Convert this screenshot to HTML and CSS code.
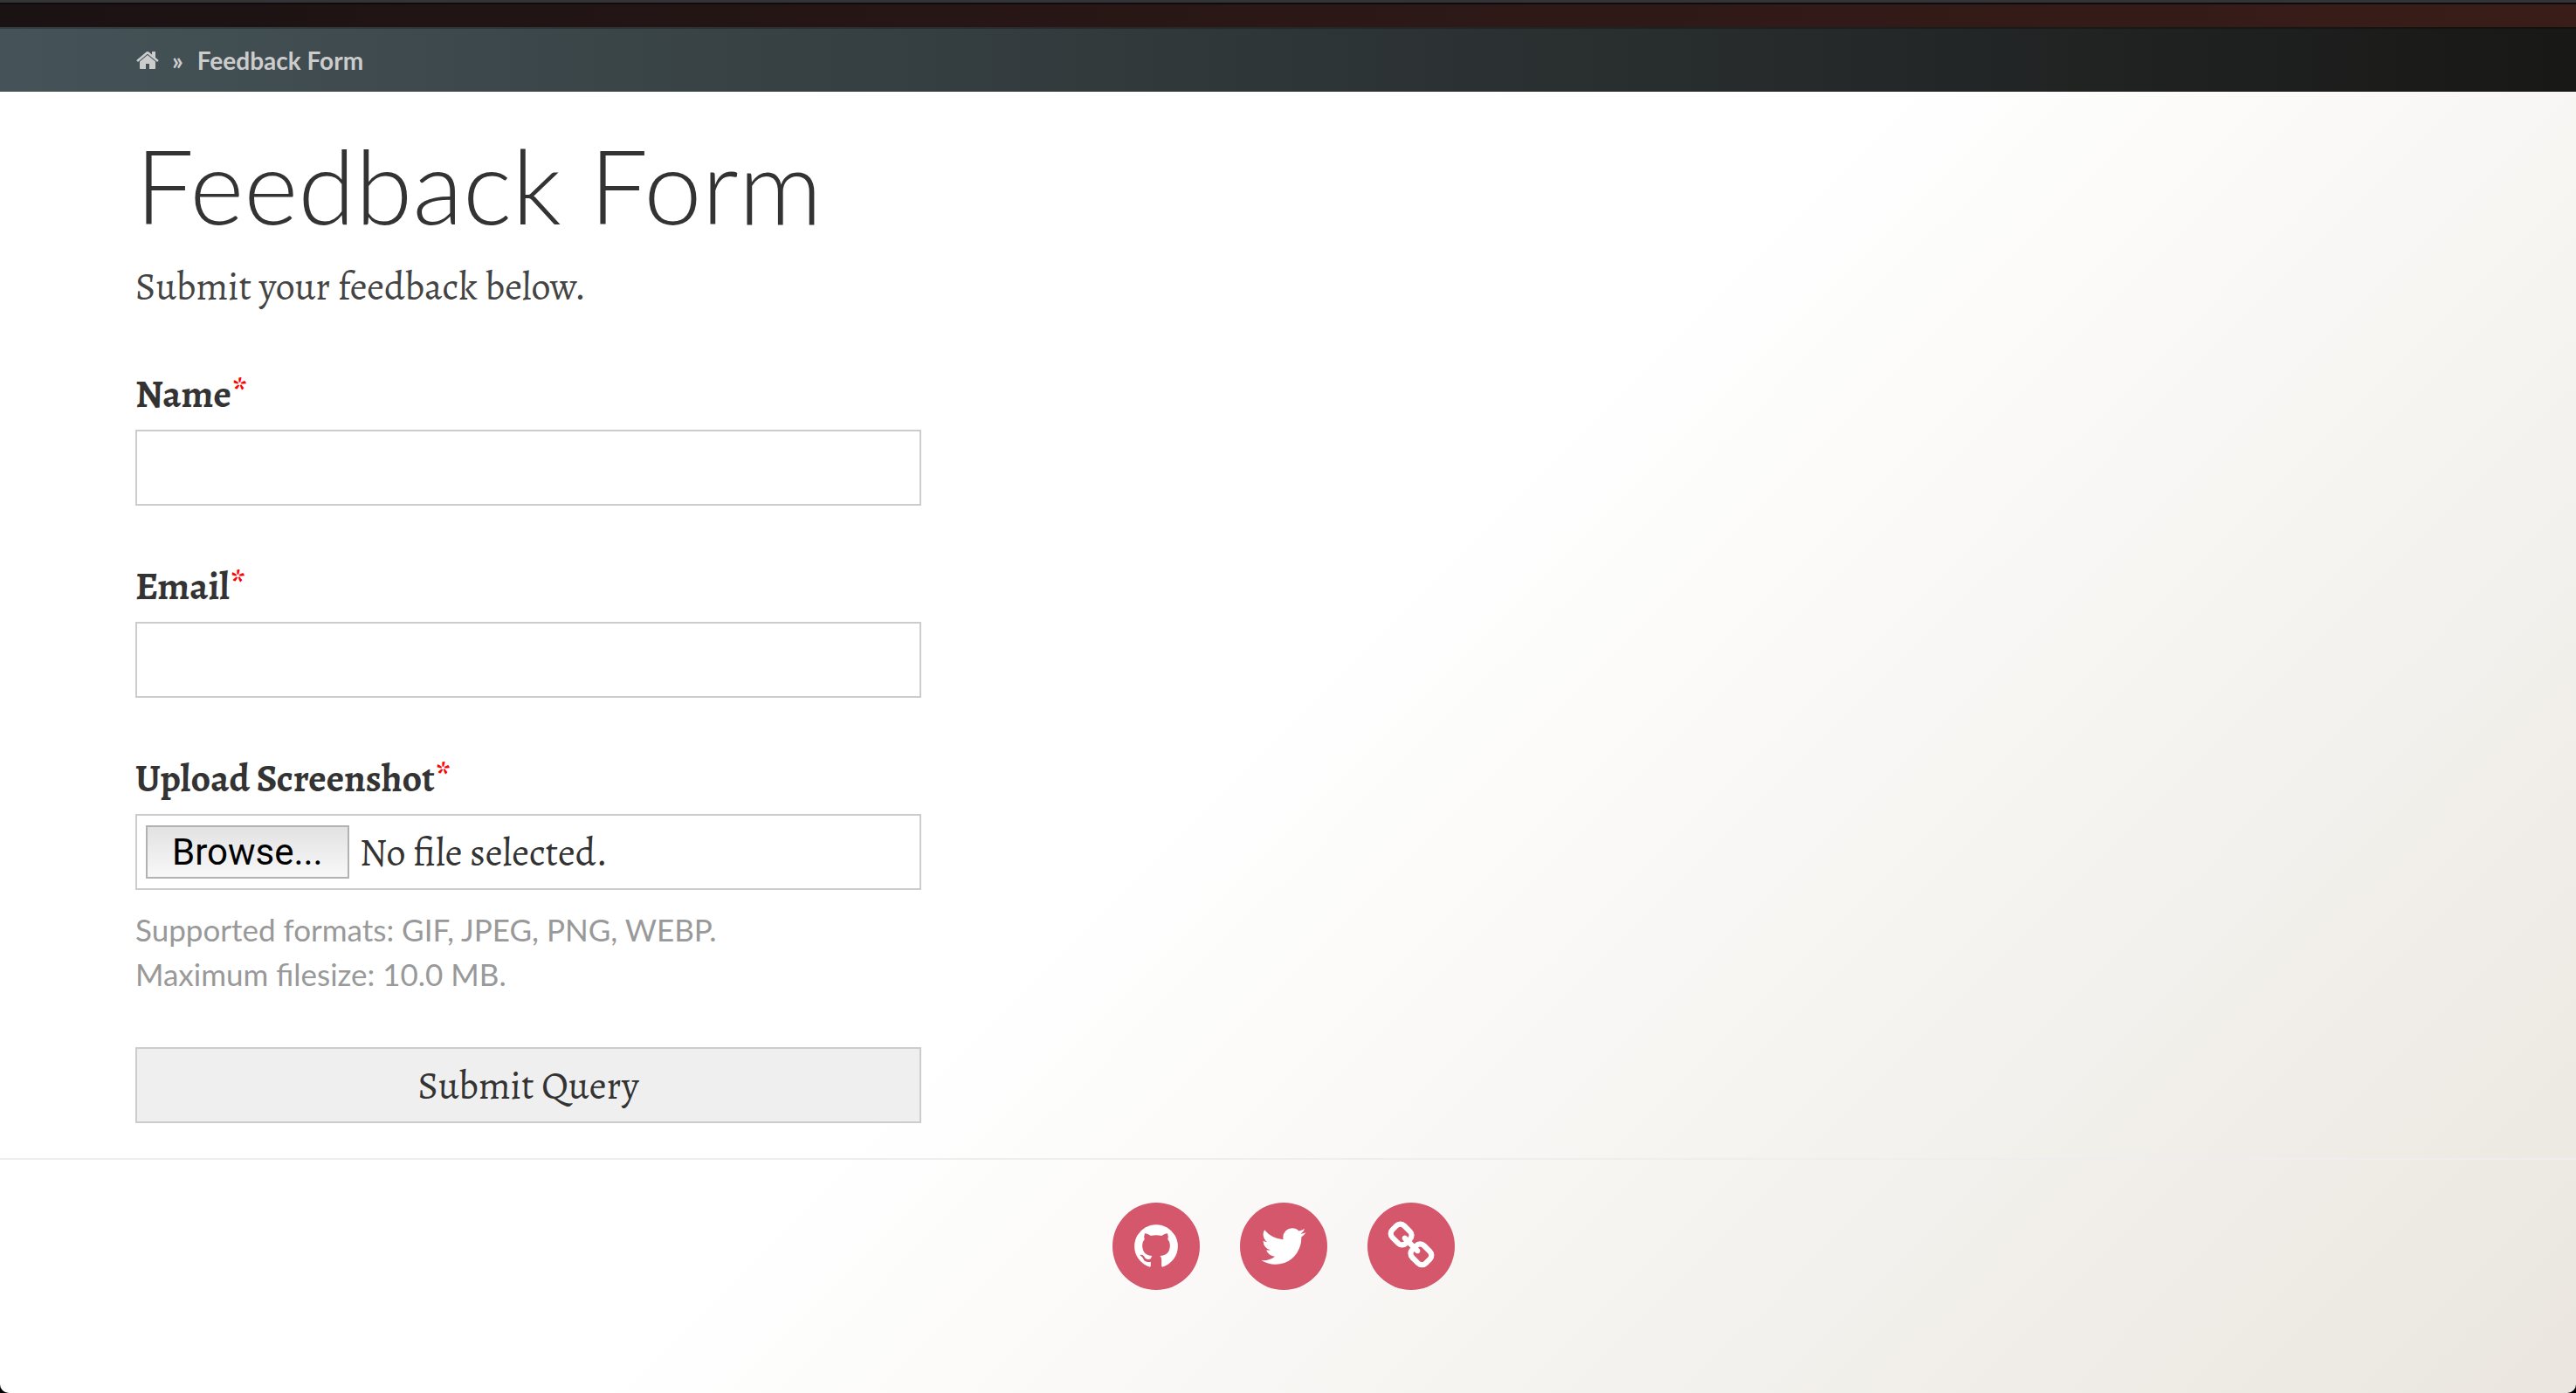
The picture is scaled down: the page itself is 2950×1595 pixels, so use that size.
FILE: index.html
```html
<!DOCTYPE html>
<html lang="en">
<head>
<meta charset="utf-8">
<meta name="viewport" content="width=device-width, initial-scale=1">
<title>Feedback Form</title>
<link rel="stylesheet" href="styles.css">
</head>
<body>
<div class="page">
  <div class="topbar"></div>
  <nav class="breadcrumb" aria-label="Breadcrumb">
    <a class="breadcrumb-home" href="#" aria-label="Home"><svg class="icon-home" viewBox="0 0 1792 1792" aria-hidden="true"><path d="M1472 992v480q0 26-19 45t-45 19h-384v-384h-256v384h-384q-26 0-45-19t-19-45v-480q0-1 .5-3t.5-3l575-474 575 474q1 2 1 6zm223-69l-62 74q-8 9-21 11h-3q-13 0-21-7l-692-577-692 577q-12 8-24 7-13-2-21-11l-62-74q-8-10-7-23.5t11-21.5l719-599q32-26 76-26t76 26l244 204v-195q0-14 9-23t23-9h192q14 0 23 9t9 23v408l219 182q10 8 11 21.5t-7 23.5z"/></svg></a>
    <span class="breadcrumb-sep">»</span>
    <a class="breadcrumb-current" href="#">Feedback Form</a>
  </nav>
  <main class="content">
    <h1 class="title">Feedback Form</h1>
    <p class="intro">Submit your feedback below.</p>
    <form class="form">
      <div class="field">
        <label class="label" for="name">Name<span class="required">*</span></label>
        <input class="input" id="name" type="text">
      </div>
      <div class="field">
        <label class="label" for="email">Email<span class="required">*</span></label>
        <input class="input" id="email" type="email">
      </div>
      <div class="field">
        <label class="label" for="screenshot">Upload Screenshot<span class="required">*</span></label>
        <div class="input file">
          <span class="file-button" aria-hidden="true">Browse...</span>
          <span class="file-name" aria-hidden="true">No file selected.</span>
          <input class="file-native" id="screenshot" type="file" accept=".gif,.jpg,.jpeg,.png,.webp">
        </div>
        <p class="help">Supported formats: GIF, JPEG, PNG, WEBP.<br>Maximum filesize: 10.0 MB.</p>
      </div>
      <button class="submit" type="submit">Submit Query</button>
    </form>
  </main>
  <footer class="footer">
    <a class="social" href="#" aria-label="GitHub"><svg class="icon-social" viewBox="0 0 1792 1792" aria-hidden="true"><path d="M896 128q209 0 385.500 103t279.500 279.500 103 385.500q0 251-146.500 451.500t-378.500 277.500q-27 5-40-7t-13-30q0-3 .5-76.500t.5-134.500q0-97-52-142 57-6 102.500-18t94-39 81-66.500 53-105 20.500-150.500q0-119-79-206 37-91-8-204-28-9-81 11t-92 44l-38 24q-93-26-192-26t-192 26q-16-11-42.500-27t-83.500-38.500-85-13.500q-45 113-8 204-79 87-79 206 0 85 20.500 150t52.500 105 80.500 67 94 39 102.500 18q-39 36-49 103-21 10-45 15t-57 5-65.500-21.500-55.500-62.500q-19-32-48.500-52t-49.500-24l-20-3q-21 0-29 4.500t-5 11.500 9 14 13 12l7 5q22 10 43.500 38t31.500 51l10 23q13 38 44 61.500t67 30 69.500 7 55.500-3.500l23-4q0 38 .5 88.500t.5 54.500q0 18-13 30t-40 7q-232-77-378.500-277.500t-146.500-451.500q0-209 103-385.500t279.500-279.500 385.500-103z"/></svg></a>
    <a class="social" href="#" aria-label="Twitter"><svg class="icon-social" viewBox="0 0 1792 1792" aria-hidden="true"><path d="M1684 408q-67 98-162 167 1 14 1 42 0 130-38 259.500t-115.500 248.500-184.500 210.500-258 146-323 54.500q-271 0-496-145 35 4 78 4 225 0 401-138-105-2-188-64.500t-114-159.500q33 5 61 5 43 0 85-11-112-23-185.500-111.500t-73.500-205.500v-4q68 38 146 41-66-44-105-115t-39-154q0-88 44-163 121 149 294.500 238.500t371.500 99.500q-8-38-8-74 0-134 94.500-228.500t228.500-94.500q140 0 236 102 109-21 205-78-37 115-142 178 93-10 186-50z"/></svg></a>
    <a class="social" href="#" aria-label="Website"><svg class="icon-social" viewBox="0 0 1792 1792" aria-hidden="true"><path d="M1520 1216q0-40-28-68l-208-208q-28-28-68-28-42 0-72 32 3 3 19 18.500t21.500 21.500 15 19 13 25.500 3.500 27.500q0 40-28 68t-68 28q-15 0-27.500-3.500t-25.500-13-19-15-21.500-21.500-18.500-19q-33 31-33 73 0 40 28 68l206 207q27 27 68 27 40 0 68-26l147-146q28-28 28-67zm-703-705q0-40-28-68l-206-207q-28-28-68-28-39 0-68 27l-147 146q-28 28-28 67 0 40 28 68l208 208q27 27 68 27 42 0 72-31-3-3-19-18.500t-21.500-21.500-15-19-13-25.500-3.500-27.500q0-40 28-68t68-28q15 0 27.500 3.500t25.500 13 19 15 21.500 21.500 18.500 19q33-31 33-73zm895 705q0 120-85 203l-147 146q-83 83-203 83-121 0-204-85l-206-207q-83-83-83-203 0-123 88-209l-88-88q-86 88-208 88-120 0-204-84l-208-208q-84-84-84-204t85-203l147-146q83-83 203-83 121 0 204 85l206 207q83 83 83 203 0 123-88 209l88 88q86-88 208-88 120 0 204 84l208 208q84 84 84 204z"/></svg></a>
  </footer>
</div>
</body>
</html>
```
FILE: styles.css
```css
* {
  box-sizing: border-box;
}

html {
  background: #000;
}

body {
  margin: 0;
  color: #333;
  font-family: "Alegreya", "Liberation Serif", serif;
  font-size: 44px;
  line-height: 60px;
}

.page {
  display: flex;
  flex-direction: column;
  min-height: 100vh;
  border-radius: 0 0 10px 10px;
  overflow: hidden;
  background: linear-gradient(135deg, #fff 50%, #eae6df 100%);
}

.topbar {
  height: 31px;
  border-top: 3px solid #343436;
  background: linear-gradient(#0c0c0e 2px, transparent 2px), linear-gradient(90deg, #1b1213, #3a1d19);
}

.breadcrumb {
  display: flex;
  align-items: center;
  height: 74px;
  padding: 0 155px;
  border-top: 2px solid rgba(0, 0, 0, 0.25);
  background: linear-gradient(90deg, #455358, #181816) border-box;
  color: #ccc;
  font-family: "Lato", sans-serif;
  font-size: 28px;
  font-weight: 700;
  line-height: 40px;
}

.breadcrumb a {
  color: inherit;
  text-decoration: none;
}

.breadcrumb-home {
  display: flex;
}

.icon-home {
  width: 28px;
  height: 28px;
  fill: currentColor;
}

.breadcrumb-sep {
  margin: 0 16px 0 14px;
}

.content {
  padding: 36px 155px 40px;
}

.title {
  margin: 0;
  font-family: "Lato", sans-serif;
  font-size: 119px;
  font-weight: 300;
  line-height: 140px;
}

.intro {
  margin: 17px 0 0;
  color: #444;
}

.form {
  display: flex;
  flex-direction: column;
  max-width: 900px;
  margin-top: 63px;
}

.field {
  display: flex;
  flex-direction: column;
  margin-bottom: 62px;
}

.field:last-of-type {
  margin-bottom: 58px;
}

.label {
  margin-bottom: 11px;
  font-weight: 700;
}

.required {
  color: #f00;
  font-weight: 400;
}

.input,
.submit {
  width: 100%;
  height: 87px;
  margin: 0;
  border: 2px solid #ccc;
  border-radius: 0;
  background: #fff;
  color: #333;
  font: inherit;
}

.input {
  padding: 10px;
}

.file {
  position: relative;
  display: flex;
  align-items: center;
  gap: 12px;
}

.file-button {
  padding: 0 28px;
  border: 2px solid #b2b2b2;
  background: linear-gradient(#e2e2e2, #f8f8f8);
  color: #000;
  font-family: "Roboto", sans-serif;
  font-size: 42px;
  line-height: 57px;
}

.file-native {
  position: absolute;
  inset: 0;
  width: 100%;
  opacity: 0;
  cursor: pointer;
}

.help {
  margin: 20px 0 0;
  color: #999;
  font-family: "Lato", sans-serif;
  font-size: 35px;
  line-height: 51px;
}

.submit {
  background: #efefef;
}

.footer {
  display: flex;
  justify-content: center;
  gap: 46px;
  padding: 49px 10px 49px 0;
  border-top: 2px solid #eee;
}

.social {
  display: flex;
  align-items: center;
  justify-content: center;
  width: 100px;
  height: 100px;
  border-radius: 50%;
  background: #d4576b;
  color: #fff;
}

.icon-social {
  width: 58px;
  height: 58px;
  fill: currentColor;
}
```
